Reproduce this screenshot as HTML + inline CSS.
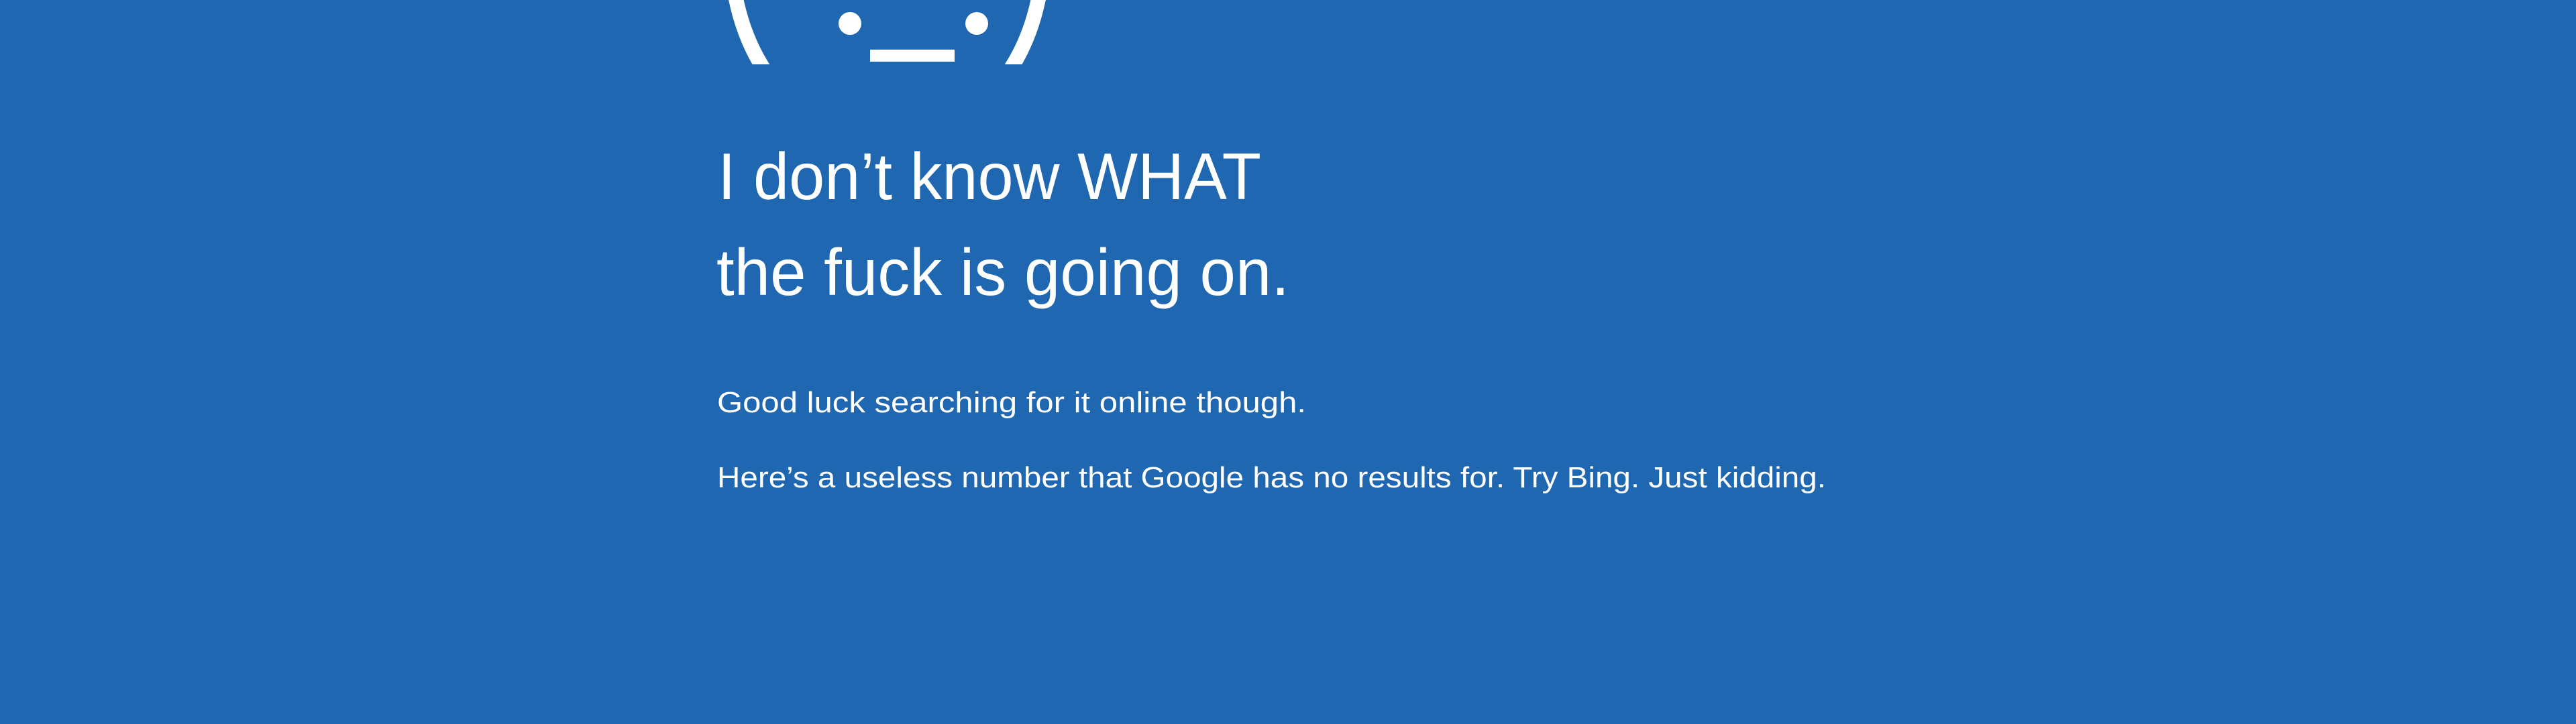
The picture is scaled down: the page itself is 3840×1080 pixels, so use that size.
<!DOCTYPE html>
<html><head><meta charset="utf-8"><style>
html,body{margin:0;padding:0;background:#2067B2;width:3840px;height:1080px;overflow:hidden}
svg{display:block}
</style></head><body>
<svg width="3840" height="1080" xmlns="http://www.w3.org/2000/svg">
<defs><clipPath id="c"><rect x="0" y="0" width="3840" height="96"/></clipPath></defs>
<rect width="3840" height="1080" fill="#2067B2"/>
<g clip-path="url(#c)" fill="none" stroke="#fff" stroke-width="22">
<path d="M1088,-80 Q1092,40 1147,115"/>
<path d="M1557,-80 Q1553,40 1498,115"/>
</g>
<circle cx="1267" cy="35" r="17" fill="#fff"/>
<circle cx="1456" cy="35" r="17" fill="#fff"/>
<rect x="1297" y="74" width="126" height="18" fill="#fff"/>
<g fill="#fff" font-family="Liberation Sans, sans-serif">
<text x="1070" y="297" font-size="98" textLength="810" lengthAdjust="spacingAndGlyphs">I don’t know WHAT</text>
<text x="1068" y="440" font-size="98" textLength="854" lengthAdjust="spacingAndGlyphs">the fuck is going on.</text>
<text x="1069" y="615" font-size="44" textLength="878" lengthAdjust="spacingAndGlyphs">Good luck searching for it online though.</text>
<text x="1069" y="727" font-size="44" textLength="1653" lengthAdjust="spacingAndGlyphs">Here’s a useless number that Google has no results for. Try Bing. Just kidding.</text>
</g>
</svg>
</body></html>
